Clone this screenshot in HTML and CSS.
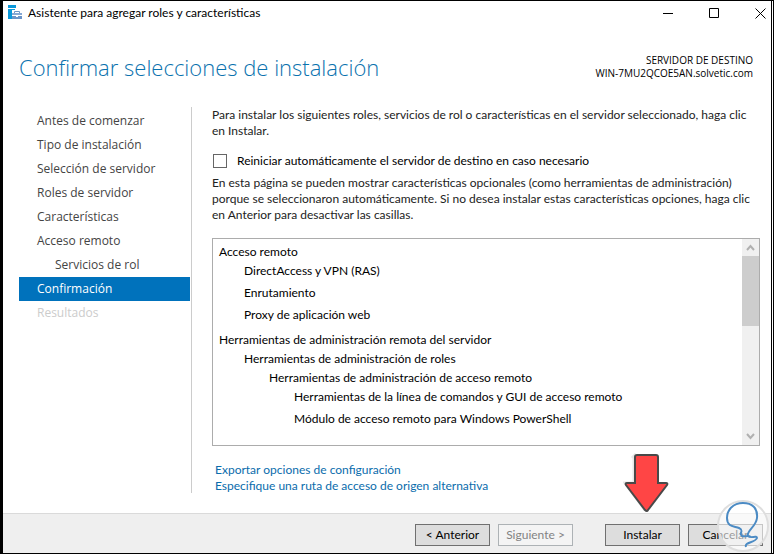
FILE: index.html
```html
<!DOCTYPE html>
<html lang="es">
<head>
    <meta charset="UTF-8">
    <meta name="viewport" content="width=device-width, initial-scale=1.0">
    <title>Asistente para agregar roles y características</title>
    <link rel="stylesheet" href="styles.css">
</head>
<body>

<div class="window">
    <!-- Title bar -->
    <div class="titlebar">
        <svg class="app-icon" width="16" height="16" viewBox="0 0 16 16">
            <path d="M0 0h8v3H0zM0 4h7v1H4v9H0z" fill="#0a98da"/>
            <path d="M6.500 8.500v-2h5v2" fill="none" stroke="#6a94c8"/>
            <path d="M4 8h10v2H4z" fill="#86a8d4"/>
            <path d="M4 11h4v1h2v-1h4v3H4z" fill="#6a94c8"/>
        </svg>
        <span class="titlebar-text">Asistente para agregar roles y características</span>
        <div class="window-buttons">
            <button type="button" aria-label="Minimizar"><svg width="11" height="11"><path d="M0 5.500h10" stroke="#000"/></svg></button>
            <button type="button" aria-label="Maximizar"><svg width="11" height="11"><path d="M.5.5h9v9h-9z" fill="none" stroke="#000"/></svg></button>
            <button type="button" aria-label="Cerrar"><svg width="11" height="11"><path d="M.5.5l10 10M10.500.5l-10 10" stroke="#000"/></svg></button>
        </div>
    </div>

    <!-- Header -->
    <div class="header">
        <h1>Confirmar selecciones de instalación</h1>
        <div class="server">SERVIDOR DE DESTINO<br>WIN-7MU2QCOE5AN.solvetic.com</div>
    </div>

    <div class="body">
        <!-- Wizard steps -->
        <nav class="steps">
            <a href="#">Antes de comenzar</a>
            <a href="#">Tipo de instalación</a>
            <a href="#">Selección de servidor</a>
            <a href="#">Roles de servidor</a>
            <a href="#">Características</a>
            <a href="#">Acceso remoto</a>
            <a href="#" class="sub">Servicios de rol</a>
            <a href="#" class="active">Confirmación</a>
            <a class="disabled">Resultados</a>
        </nav>

        <!-- Page content -->
        <main class="content">
            <p>Para instalar los siguientes roles, servicios de rol o características en el servidor seleccionado, haga clic en Instalar.</p>
            <div class="check">
                <input type="checkbox" id="restart">
                <label for="restart">Reiniciar automáticamente el servidor de destino en caso necesario</label>
            </div>
            <p>En esta página se pueden mostrar características opcionales (como herramientas de administración) porque se seleccionaron automáticamente. Si no desea instalar estas características opciones, haga clic en Anterior para desactivar las casillas.</p>

            <div class="list-box">
                <ul class="tree">
                    <li class="branch"><span>Acceso remoto</span>
                        <ul>
                            <li class="leaf">DirectAccess y VPN (RAS)</li>
                            <li class="leaf">Enrutamiento</li>
                            <li class="leaf">Proxy de aplicación web</li>
                        </ul>
                    </li>
                    <li class="branch"><span>Herramientas de administración remota del servidor</span>
                        <ul>
                            <li class="branch"><span>Herramientas de administración de roles</span>
                                <ul>
                                    <li class="branch"><span>Herramientas de administración de acceso remoto</span>
                                        <ul>
                                            <li class="leaf">Herramientas de la línea de comandos y GUI de acceso remoto</li>
                                            <li class="leaf">Módulo de acceso remoto para Windows PowerShell</li>
                                        </ul>
                                    </li>
                                </ul>
                            </li>
                        </ul>
                    </li>
                </ul>
                <div class="scrollbar">
                    <svg width="17" height="17"><path d="M5 11l3.500-4 3.500 4" fill="none" stroke="#b0b0b0" stroke-width="2"/></svg>
                    <div class="thumb"></div>
                    <svg width="17" height="17"><path d="M5 6l3.500 4L12 6" fill="none" stroke="#b0b0b0" stroke-width="2"/></svg>
                </div>
            </div>

            <div class="links">
                <a href="#">Exportar opciones de configuración</a>
                <a href="#">Especifique una ruta de acceso de origen alternativa</a>
            </div>
        </main>
    </div>

    <!-- Buttons -->
    <div class="footer">
        <button type="button">&lt; Anterior</button>
        <button type="button" disabled>Siguiente &gt;</button>
        <button type="button" class="install">Instalar</button>
        <button type="button">Cancelar</button>

        <svg class="arrow" width="46" height="60" viewBox="0 0 46 60">
            <path d="M9 5l2-2v27H2l20 27" fill="none" stroke="#e8e8e8" stroke-width="3"/>
            <path d="M12 4q0-2 2-2h19q2 0 2 2v26h8q2 0 1 2L25 57q-1 2-3 0L3 32q-1-2 1-2h8z" fill="#ff4545" stroke="#494949" stroke-width="2"/>
        </svg>
        <svg class="watermark" width="54" height="54" viewBox="0 0 54 54">
            <circle cx="27" cy="27" r="25" fill="#fff" fill-opacity=".6" stroke="#dedede" stroke-width="2"/>
            <path d="M30 48c-2-5 9-4 11-9 0-3-7 1-9-2-2-5 8-9 9-18C42 9 36 4 27 4 17 4 11 11 11 19c0 9 7 8 12 10 6 3-1 5 3 8 3 1 6-1 9 1" fill="none" stroke="#4c8bc4" stroke-width="2"/>
        </svg>
    </div>
</div>

</body>
</html>
```
FILE: styles.css
```css
* {
    box-sizing: border-box;
}

body {
    margin: 0;
    font-family: Lato, "Open Sans", sans-serif;
    font-size: 12px;
    line-height: 16px;
    color: #000;
}

.window {
    display: flex;
    flex-direction: column;
    height: 100vh;
    border: 1px solid #000;
    border-left-width: 3px;
    border-right: 3px double #000;
    background-color: #fff;
}

.titlebar {
    display: flex;
    align-items: center;
    height: 24px;
    padding: 0 5px;
}

.titlebar-text {
    margin-left: 4px;
    flex: 1;
}

.window-buttons {
    display: flex;
    gap: 35px;
}

.window-buttons button {
    display: flex;
    padding: 0;
    border: none;
    background: none;
}

.header {
    display: flex;
    justify-content: space-between;
    align-items: center;
    height: 82px;
    padding: 2px 18px 0 16px;
}

h1 {
    margin: 0;
    font-family: "Open Sans", sans-serif;
    font-size: 22px;
    font-weight: 300;
    line-height: 32px;
    color: #0a72ae;
}

.server {
    font-family: "Open Sans", sans-serif;
    font-size: 10px;
    line-height: 13px;
    text-align: right;
}

.body {
    display: flex;
    flex: 1;
    min-height: 0;
    padding: 0 11px 0 16px;
    gap: 20px;
}

.steps {
    width: 173px;
    margin-bottom: 20px;
    padding: 2px 1px 0 0;
    border-right: 1px solid #ccc;
    font-family: "Open Sans", sans-serif;
}

.steps a {
    display: block;
    padding-left: 18px;
    line-height: 24px;
    color: #444;
    text-decoration: none;
}

.steps .sub {
    padding-left: 36px;
}

.steps .active {
    background-color: #0072bc;
    color: #fff;
}

.steps .disabled {
    color: #ccc;
}

.content {
    display: flex;
    flex-direction: column;
    flex: 1;
    min-width: 0;
    color: #222;
}

.content p {
    margin: 0;
}

.check {
    display: flex;
    align-items: center;
    gap: 9px;
    margin: 14px 0 6px;
    color: #000;
}

.check input {
    appearance: none;
    width: 14px;
    height: 14px;
    margin: 0 1px;
    border: 1px solid #666;
    background-color: #fff;
}

.list-box {
    display: flex;
    flex: 1;
    min-height: 0;
    margin-top: 15px;
    border: 1px solid #acacac;
    overflow: hidden;
    color: #000;
}

.tree {
    flex: 1;
    padding: 5px 6px;
}

ul {
    margin: 0;
    padding: 0;
    list-style: none;
}

.tree ul {
    padding-left: 25px;
}

.tree span {
    display: block;
    margin-bottom: 3px;
}

.leaf {
    padding-bottom: 6px;
}

.branch {
    padding-bottom: 3px;
}

.scrollbar {
    display: flex;
    flex-direction: column;
    width: 17px;
    background-color: #f0f0f0;
}

.thumb {
    height: 70px;
    margin-bottom: auto;
    background-color: #cdcdcd;
}

.links {
    display: flex;
    flex-direction: column;
    align-items: flex-start;
    padding: 16px 3px 19px;
}

.links a {
    color: #0a6cac;
    text-decoration: none;
}

.footer {
    position: relative;
    display: flex;
    justify-content: flex-end;
    align-items: center;
    gap: 8px;
    height: 40px;
    padding: 3px 8px 0;
    border-top: 1px solid #dadada;
    background-color: #efefef;
}

.footer button {
    width: 75px;
    height: 22px;
    padding: 0;
    border: 1px solid #707070;
    background-color: #ddd;
    font-family: inherit;
    font-size: 12px;
    line-height: 16px;
    color: #000;
}

.footer button:disabled {
    border-color: #adb2b5;
    background-color: #f4f4f4;
    color: #838383;
}

.footer .install {
    margin-left: 24px;
}

/* overlays */
.arrow {
    position: absolute;
    right: 102px;
    bottom: 40px;
}

.watermark {
    position: absolute;
    right: 1px;
    bottom: 0;
}
```
